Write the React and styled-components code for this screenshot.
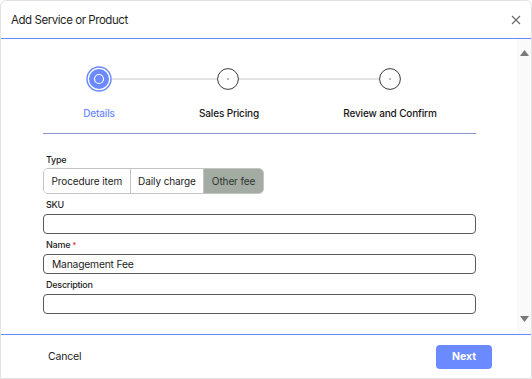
import React from 'react';
import styled, { createGlobalStyle } from 'styled-components';

const GlobalStyle = createGlobalStyle`
  html, body {
    margin: 0;
    padding: 0;
    background: #ffffff;
  }
  * {
    box-sizing: border-box;
  }
  body {
    font-family: Inter, "Noto Sans", sans-serif;
    color: #1c1c1c;
  }
`;

const Dialog = styled.div`
  width: 100vw;
  height: 100vh;
  display: flex;
  flex-direction: column;
  border: 1px solid #e2e2e2;
  border-radius: 6px 6px 0 0;
  background: #fff;
  overflow: hidden;
`;

const Header = styled.header`
  height: 38px;
  flex: none;
  display: flex;
  align-items: center;
  justify-content: space-between;
  padding: 0 6px 0 10px;
  border-bottom: 1px solid #6b8aff;
`;

const Title = styled.h1`
  margin: 0;
  font-size: 11.5px;
  font-weight: 400;
  letter-spacing: -0.45px;
  color: #1f1f1f;
`;

const CloseButton = styled.button`
  border: 0;
  background: none;
  padding: 4px;
  display: flex;
  cursor: pointer;
`;

const Body = styled.div`
  flex: 1;
  display: flex;
  min-height: 0;
`;

const Content = styled.div`
  flex: 1;
  overflow: hidden;
  padding: 0 41px 20px 42px;
`;

const ScrollTrack = styled.div`
  width: 14px;
  flex: none;
  background: #fafafa;
  display: flex;
  flex-direction: column;
  justify-content: space-between;
  align-items: center;
  padding: 11px 0 12px 1px;
`;

const Stepper = styled.div`
  padding-top: 27px;
`;

const CircleRow = styled.div`
  display: flex;
  align-items: center;
  margin-left: 43px;
  height: 26px;
`;

const Connector = styled.div`
  width: ${(p) => p.$width}px;
  height: 2px;
  background: #e2e2e2;
`;

const LabelRow = styled.div`
  display: flex;
  margin-left: 16px;
  margin-top: 14px;
  height: 14px;
`;

const StepLabel = styled.div`
  width: ${(p) => p.$width}px;
  text-align: center;
  font-size: 10px;
  line-height: 14px;
  font-weight: 500;
  letter-spacing: -0.15px;
  color: ${(p) => (p.$active ? '#6b8aff' : '#161616')};
`;

const Divider = styled.hr`
  margin: 13px 0 0;
  border: 0;
  border-top: 1px solid #8a97c8;
`;

const Form = styled.div`
  display: flex;
  flex-direction: column;
  gap: 5px;
  padding-top: 20px;
`;

const Field = styled.div`
  display: flex;
  flex-direction: column;
  gap: ${(p) => p.$gap ?? 3}px;
`;

const Label = styled.label`
  font-size: 9px;
  line-height: 12px;
  font-weight: 500;
  letter-spacing: -0.25px;
  color: #1c1c1c;
  padding-left: 3px;
`;

const Required = styled.span`
  color: #e03030;
  font-size: 8px;
  vertical-align: top;
  margin-left: 2px;
`;

const Segmented = styled.div`
  display: flex;
  align-self: flex-start;
  height: 26px;
  border: 1px solid #c4c4c4;
  border-radius: 5px;
  overflow: hidden;
`;

const Segment = styled.button`
  border: 0;
  border-left: ${(p) => (p.$first ? '0' : '1px solid #c4c4c4')};
  background: ${(p) => (p.$selected ? '#a3aba3' : '#fff')};
  color: ${(p) => (p.$selected ? '#2e332e' : '#1c1c1c')};
  font-family: inherit;
  font-size: 10px;
  letter-spacing: -0.1px;
  padding: 0 ${(p) => p.$pad}px;
  cursor: pointer;
`;

const Input = styled.input`
  height: 20px;
  width: 100%;
  border: 1px solid #5a5a5a;
  border-radius: 4px;
  padding: 0 8px;
  font-family: inherit;
  font-size: 10.3px;
  letter-spacing: -0.2px;
  color: #1c1c1c;
  outline: none;
`;

const Footer = styled.footer`
  height: 44px;
  flex: none;
  display: flex;
  align-items: center;
  justify-content: space-between;
  padding: 0 39px 0 47px;
  border-top: 1px solid #6b8aff;
`;

const TextButton = styled.button`
  border: 0;
  background: none;
  padding: 0;
  font-family: inherit;
  font-size: 10.5px;
  letter-spacing: -0.2px;
  color: #1c1c1c;
  cursor: pointer;
`;

const PrimaryButton = styled.button`
  width: 56px;
  height: 24px;
  border: 0;
  border-radius: 4px;
  background: #6b8aff;
  color: #fff;
  font-family: inherit;
  font-size: 10.5px;
  font-weight: 700;
  cursor: pointer;
`;

const ActiveStepIcon = () => (
  <svg width="26" height="26" viewBox="0 0 26 26">
    <circle cx="13" cy="13" r="12" fill="none" stroke="#6b8aff" strokeWidth="1.5" />
    <circle cx="13" cy="13" r="10" fill="#6b8aff" />
    <circle cx="13" cy="13" r="4.5" fill="none" stroke="#fff" strokeWidth="1.2" />
  </svg>
);

const StepIcon = () => (
  <svg width="22" height="22" viewBox="0 0 22 22">
    <circle cx="11" cy="11" r="10.4" fill="#fff" stroke="#3a3a3a" strokeWidth="1" />
    <circle cx="11" cy="11" r="0.7" fill="#3a3a3a" />
  </svg>
);

const CloseIcon = () => (
  <svg width="10" height="10" viewBox="0 0 10 10">
    <path d="M1 1L9 9M9 1L1 9" stroke="#6a6a6a" strokeWidth="1.2" />
  </svg>
);

const ArrowIcon = ({ down }) => (
  <svg width="9" height="6" viewBox="0 0 9 6">
    <path d={down ? 'M0 0H9L4.5 6Z' : 'M0 6H9L4.5 0Z'} fill="#7a7a7a" />
  </svg>
);

export default function App() {
  return (
    <>
      <GlobalStyle />
      <Dialog>
        <Header>
          <Title>Add Service or Product</Title>
          <CloseButton aria-label="Close">
            <CloseIcon />
          </CloseButton>
        </Header>
        <Body>
          <Content>
            <Stepper>
              <CircleRow>
                <ActiveStepIcon />
                <Connector $width={105} />
                <StepIcon />
                <Connector $width={140} />
                <StepIcon />
              </CircleRow>
              <LabelRow>
                <StepLabel $width={80} $active>Details</StepLabel>
                <StepLabel $width={180}>Sales Pricing</StepLabel>
                <StepLabel $width={142}>Review and Confirm</StepLabel>
              </LabelRow>
            </Stepper>
            <Divider />
            <Form>
              <Field $gap={2}>
                <Label>Type</Label>
                <Segmented>
                  <Segment $first $pad={7.5}>Procedure item</Segment>
                  <Segment $pad={7.5}>Daily charge</Segment>
                  <Segment $pad={7.5} $selected>Other fee</Segment>
                </Segmented>
              </Field>
              <Field>
                <Label>SKU</Label>
                <Input />
              </Field>
              <Field>
                <Label>
                  Name<Required>*</Required>
                </Label>
                <Input defaultValue="Management Fee" />
              </Field>
              <Field>
                <Label>Description</Label>
                <Input />
              </Field>
            </Form>
          </Content>
          <ScrollTrack>
            <ArrowIcon />
            <ArrowIcon down />
          </ScrollTrack>
        </Body>
        <Footer>
          <TextButton>Cancel</TextButton>
          <PrimaryButton>Next</PrimaryButton>
        </Footer>
      </Dialog>
    </>
  );
}
